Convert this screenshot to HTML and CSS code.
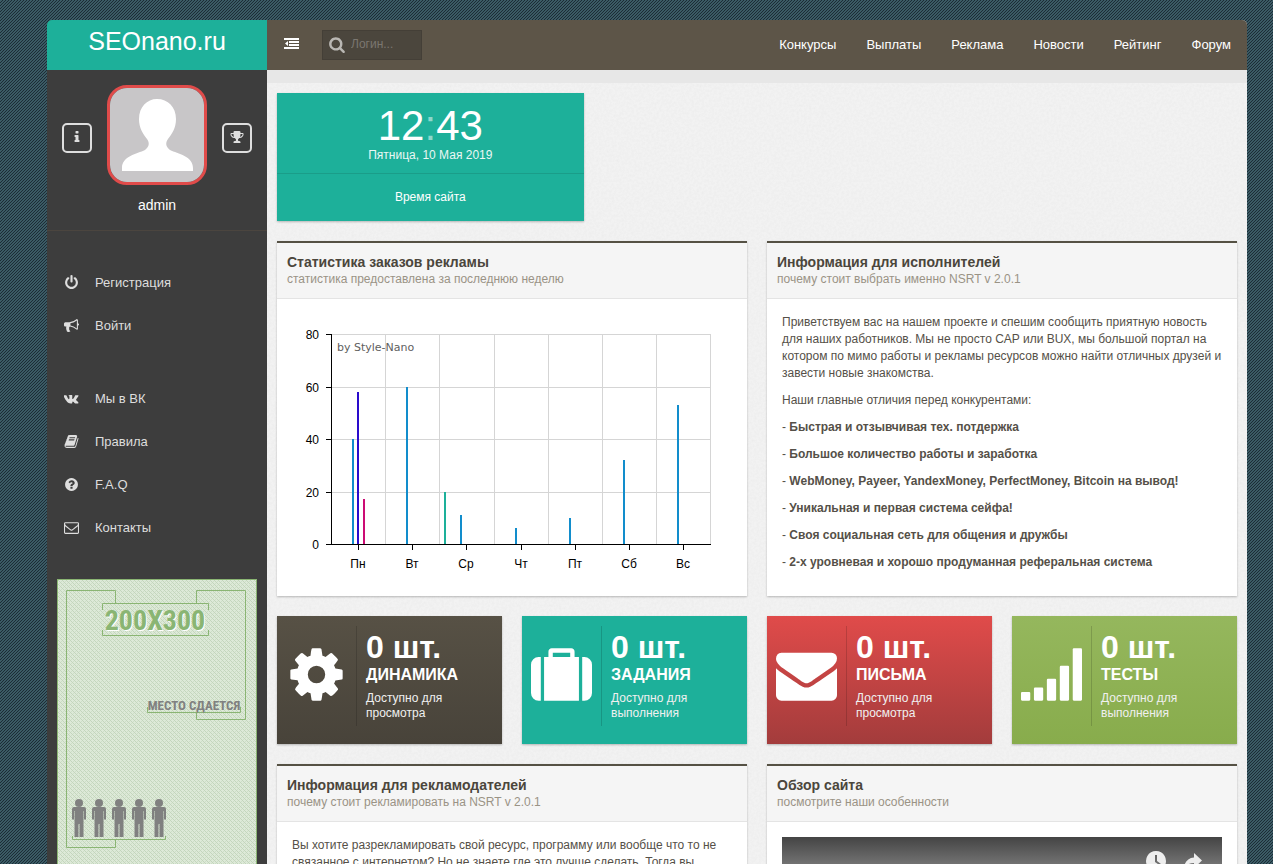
FILE: index.html
```html
<!DOCTYPE html>
<html lang="ru">
<head>
<meta charset="utf-8">
<title>SEOnano.ru</title>
<link rel="stylesheet" href="styles.css">
</head>
<body>
<svg class="defs" aria-hidden="true">
  <symbol id="i-power" viewBox="0 0 1792 1792"><path d="M1664 896q0 156-61 298t-164 245-245 164-298 61-298-61-245-164-164-245-61-298q0-182 80.500-343t226.500-270q43-32 95.500-25t83.500 50q32 42 24.500 94.500t-49.500 84.500q-98 74-151.500 181t-53.500 228q0 104 40.500 198.500t109.500 163.500 163.500 109.500 198.500 40.500 198.500-40.500 163.500-109.500 109.500-163.500 40.500-198.500q0-121-53.500-228t-151.500-181q-42-32-49.500-84.500t24.500-94.500q31-43 84-50t95 25q146 109 226.500 270t80.500 343zm-640-768v640q0 52-38 90t-90 38-90-38-38-90v-640q0-52 38-90t90-38 90 38 38 90z"/></symbol>
  <symbol id="i-horn" viewBox="0 0 1792 1792"><path d="M1664 640q53 0 90.500 37.500t37.500 90.500-37.500 90.500-90.500 37.500v384q0 52-38 90t-90 38q-417-347-812-380-58 19-91 66t-31 100.500 40 92.500q-20 33-23 65.500t6 58 33.500 55 48 50 61.500 50.500q-29 58-111.500 83t-168.500 11.500-132-55.500q-7-23-29.500-87.500t-32-94.500-23-89-15-101 3.500-98.500 22-110.500h-122q-66 0-113-47t-47-113v-192q0-66 47-113t113-47h480q435 0 896-384 52 0 90 38t38 90v384zm-128 604v-954q-394 302-768 343v270q377 42 768 341z"/></symbol>
  <symbol id="i-vk" viewBox="0 0 1920 1792"><path d="M1853 520q23 64-150 294-24 32-65 85-78 100-90 131-17 41 14 81 17 21 81 82h1l1 1 1 1 2 2q141 131 191 221 3 5 6.500 12.500t7 26.500-.5 34-25 27.500-59 12.500l-256 4q-24 5-56-5t-52-22l-20-12q-30-21-70-64t-68.500-77.500-61-58-56.500-15.500q-3 1-8 3.500t-17 14.500-21.500 29.500-17 52-6.500 77.500q0 15-3.500 27.500t-7.500 18.500l-4 5q-18 19-53 22h-115q-71 4-146-16.500t-131.500-53-103-66-70.500-57.500l-25-24q-10-10-27.500-30t-71.500-91-106-151-122.500-211-130.500-272q-6-16-6-27t3-16l4-6q15-19 57-19l274-2q12 2 23 6.500t16 8.500l5 3q16 11 24 32 20 50 46 103.500t41 81.500l16 29q29 60 56 104t48.500 68.500 41.500 38.500 34 14 27-5q2-1 5-5t12-22 13.500-47 9.500-81 0-125q-2-40-9-73t-14-46l-6-12q-25-34-85-43-13-2 5-24 16-19 38-30 53-26 239-24 82 1 135 13 20 5 33.500 13.500t20.500 24 10.500 32 3.500 45.500-1 55-2.500 70.500-1.500 82.500q0 11-1 42t-.5 48 3.500 40.500 11.500 39 22.500 24.500q8 2 17 4t26-11 38-34.500 52-67 68-107.500q60-104 107-225 4-10 10-17.500t11-10.500l4-3 5-2.500 13-3 20-.5 288-2q39-5 64 2.500t31 16.500z"/></symbol>
  <symbol id="i-book" viewBox="0 0 1792 1792"><path d="M1703 478q40 57 18 129l-275 906q-19 64-76.500 107.500t-122.500 43.500h-923q-77 0-148.500-53.500t-99.500-131.500q-24-67-2-127 0-4 3-27t4-37q1-8-3-21.500t-3-19.500q2-11 8-21t16.500-23.500 16.500-23.500q23-38 45-91.500t30-91.500q3-10 .5-30t-.5-28q3-11 17-28t17-23q21-36 42-92t25-90q1-9-2.500-32t.5-28q4-13 22-30.500t22-22.500q19-26 42.500-84.500t27.500-96.500q1-8-3-25.500t-2-26.500q2-8 9-18t18-23 17-21q8-12 16.500-30.500t15-35 16-36 19.500-32 26.500-23.500 36-11.500 47.500 5.500l-1 3q38-9 51-9h761q74 0 114 56t18 130l-274 906q-36 119-71.500 153.500t-128.500 34.500h-869q-27 0-38 15-11 16-1 43 24 70 144 70h923q29 0 56-15.500t35-41.500l300-987q7-22 5-57 38 15 59 43zm-1064 2q-4 13 2 22.500t20 9.500h608q13 0 25.500-9.500t16.500-22.500l21-64q4-13-2-22.500t-20-9.500h-608q-13 0-25.500 9.500t-16.500 22.500zm-83 256q-4 13 2 22.500t20 9.500h608q13 0 25.500-9.500t16.500-22.500l21-64q4-13-2-22.500t-20-9.500h-608q-13 0-25.500 9.500t-16.500 22.500z"/></symbol>
  <symbol id="i-faq" viewBox="0 0 1792 1792"><path d="M1024 1376v-192q0-14-9-23t-23-9h-192q-14 0-23 9t-9 23v192q0 14 9 23t23 9h192q14 0 23-9t9-23zm256-672q0-88-55.500-163t-138.500-116-170-41q-243 0-371 213-15 24 8 42l132 100q7 6 19 6 16 0 25-12 53-68 86-92 34-24 86-24 48 0 85.500 26t37.500 59q0 38-20 61t-68 45q-63 28-115.500 86.500t-52.500 125.500v36q0 14 9 23t23 9h192q14 0 23-9t9-23q0-19 21.500-49.500t54.500-49.500q32-18 49-28.500t46-35 44.500-48 28-60.500 12.500-81zm384 192q0 209-103 385.500t-279.500 279.500-385.500 103-385.500-103-279.500-279.500-103-385.500 103-385.500 279.500-279.500 385.500-103 385.500 103 279.500 279.500 103 385.500z"/></symbol>
  <symbol id="i-mail" viewBox="0 0 1792 1792"><path d="M1664 1504v-768q-32 36-69 66-268 206-426 338-51 43-83 67t-86.500 48.500-102.500 24.500h-2q-48 0-102.500-24.500t-86.500-48.500-83-67q-158-132-426-338-37-30-69-66v768q0 13 9.500 22.500t22.500 9.500h1472q13 0 22.500-9.500t9.500-22.500zm0-1051v-24.500l-.5-13-3-12.500-5.500-9-9-7.500-14-2.500h-1472q-13 0-22.500 9.500t-9.500 22.500q0 168 147 284 193 152 401 317 6 5 35 29.500t46 37.500 44.500 31.500 50.500 27.500 43 9h2q20 0 43-9t50.500-27.500 44.500-31.500 46-37.500 35-29.500q208-165 401-317 54-43 100.500-115.500t46.500-131.500zm128-37v1088q0 66-47 113t-113 47h-1472q-66 0-113-47t-47-113v-1088q0-66 47-113t113-47h1472q66 0 113 47t47 113z"/></symbol>
  <symbol id="i-info" viewBox="0 0 1792 1792"><path d="M1216 1344v128q0 26-19 45t-45 19h-512q-26 0-45-19t-19-45v-128q0-26 19-45t45-19h64v-384h-64q-26 0-45-19t-19-45v-128q0-26 19-45t45-19h384q26 0 45 19t19 45v576h64q26 0 45 19t19 45zm-128-1152v192q0 26-19 45t-45 19h-256q-26 0-45-19t-19-45v-192q0-26 19-45t45-19h256q26 0 45 19t19 45z"/></symbol>
  <symbol id="i-trophy" viewBox="0 0 1792 1792"><path d="M522 883q-74-162-74-371h-256v96q0 78 94.500 162t235.500 113zm1078-275v-96h-256q0 209-74 371 141-29 235.500-113t94.500-162zm128-128v128q0 71-41.500 143t-112 130-173 97.500-215.500 44.500q-42 54-95 95-38 34-52.500 72.500t-14.500 89.500q0 54 30.500 91t97.500 37q75 0 133.500 45.500t58.500 114.500v64q0 14-9 23t-23 9h-832q-14 0-23-9t-9-23v-64q0-69 58.500-114.500t133.500-45.500q67 0 97.500-37t30.500-91q0-51-14.500-89.500t-52.500-72.500q-53-41-95-95-113-5-215.500-44.500t-173-97.500-112-130-41.500-143v-128q0-40 28-68t68-28h288v-96q0-66 47-113t113-47h576q66 0 113 47t47 113v96h288q40 0 68 28t28 68z"/></symbol>
  <symbol id="i-search" viewBox="0 0 1792 1792"><path d="M1216 832q0-185-131.500-316.500t-316.500-131.500-316.500 131.500-131.500 316.500 131.500 316.500 316.500 131.500 316.500-131.500 131.500-316.500zm512 832q0 52-38 90t-90 38q-54 0-90-38l-343-342q-179 124-399 124-143 0-273.500-55.500t-225-150-150-225-55.500-273.500 55.500-273.500 150-225 225-150 273.500-55.500 273.500 55.500 225 150 150 225 55.500 273.500q0 220-124 399l343 343q37 37 37 90z"/></symbol>
  <symbol id="i-cog" viewBox="0 0 1792 1792"><path d="M1152 896q0-106-75-181t-181-75-181 75-75 181 75 181 181 75 181-75 75-181zm512-109v222q0 12-8 23t-20 13l-185 28q-19 54-39 91 35 50 107 138 10 12 10 25t-9 23q-27 37-99 108t-94 71q-12 0-26-9l-138-108q-44 23-91 38-16 136-29 186-7 28-36 28h-222q-14 0-24.500-8.500t-11.500-21.500l-28-184q-49-16-90-37l-141 107q-10 9-25 9-14 0-25-11-126-114-165-168-7-10-7-23 0-12 8-23 15-21 51-66.500t54-70.500q-27-50-41-99l-183-27q-13-2-21-12.500t-8-23.500v-222q0-12 8-23t19-13l186-28q14-46 39-92-40-57-107-138-10-12-10-24 0-10 9-23 26-36 98.500-107.500t94.500-71.500q13 0 26 10l138 107q44-23 91-38 16-136 29-186 7-28 36-28h222q14 0 24.500 8.500t11.500 21.500l28 184q49 16 90 37l142-107q9-9 24-9 13 0 25 10 129 119 165 170 7 8 7 22 0 12-8 23-15 21-51 66.500t-54 70.500q26 50 41 98l183 28q13 2 21 12.500t8 23.500z"/></symbol>
  <symbol id="i-case" viewBox="0 0 1792 1792"><path d="M640 384h512v-128h-512v128zm-352 0v1280h-64q-92 0-158-66t-66-158v-832q0-92 66-158t158-66h64zm1120 0v1280h-1024v-1280h128v-160q0-40 28-68t68-28h576q40 0 68 28t28 68v160h128zm384 224v832q0 92-66 158t-158 66h-64v-1280h64q92 0 158 66t66 158z"/></symbol>
  <symbol id="i-envelope" viewBox="0 0 1792 1792"><path d="M1792 710v794q0 66-47 113t-113 47h-1472q-66 0-113-47t-47-113v-794q44 49 101 87 362 246 497 345 57 42 92.500 65.500t94.500 48 110 24.500h2q51 0 110-24.500t94.500-48 92.500-65.500q170-123 498-345 57-39 100-87zm0-294q0 79-49 151t-122 123q-376 261-468 325-10 7-42.500 30.500t-54 38-52 32.500-57.500 27-50 9h-2q-23 0-50-9t-57.500-27-52-32.500-54-38-42.500-30.500q-91-64-262-182.500t-205-142.500q-62-42-117-115.500t-55-136.500q0-78 41.500-130t118.500-52h1472q65 0 112.500 47t47.500 113z"/></symbol>
  <symbol id="i-signal" viewBox="0 0 1792 1792"><rect x="0" y="1408" width="272" height="256" rx="32"/><rect x="380" y="1280" width="272" height="384" rx="32"/><rect x="760" y="1024" width="272" height="640" rx="32"/><rect x="1140" y="640" width="272" height="1024" rx="32"/><rect x="1520" y="128" width="272" height="1536" rx="32"/></symbol>
  <symbol id="man" viewBox="0 0 14 38"><circle cx="7" cy="4" r="4"/><path d="M2 8h10q2 0 2 2v10.500h-2V12h-.5v26h-4V25h-1v13h-4V12H2v8.500H0V10q0-2 2-2z"/></symbol>
</svg>

<div class="wrapper">
  <aside class="sidebar">
    <a class="logo" href="#">SEOnano.ru</a>
    <div class="profile">
      <div class="profile-row">
        <button class="square" type="button" aria-label="Информация"><svg><use href="#i-info"/></svg></button>
        <svg class="avatar" viewBox="0 0 94 94" role="img" aria-label="admin"><rect width="94" height="94" fill="#c8c6c8"/><path fill="#fff" d="M47 11c11 0 19 8 19 20 0 9-4 15-8 20-3 4-2 8 2 11 8 4 23 6 23 18v3H12v-3c0-12 15-14 23-18 4-3 5-7 2-11-4-5-8-11-8-20 0-12 8-20 18-20z"/></svg>
        <button class="square" type="button" aria-label="Рейтинг"><svg><use href="#i-trophy"/></svg></button>
      </div>
      <div class="name">admin</div>
    </div>
    <nav class="menu">
      <a href="#"><svg><use href="#i-power"/></svg>Регистрация</a>
      <a href="#"><svg><use href="#i-horn"/></svg>Войти</a>
    </nav>
    <nav class="menu">
      <a href="#"><svg><use href="#i-vk"/></svg>Мы в ВК</a>
      <a href="#"><svg><use href="#i-book"/></svg>Правила</a>
      <a href="#"><svg><use href="#i-faq"/></svg>F.A.Q</a>
      <a href="#"><svg><use href="#i-mail"/></svg>Контакты</a>
    </nav>
    <a class="banner" href="#">
      <svg viewBox="0 0 200 300">
        <defs><pattern id="weave" width="4" height="4" patternUnits="userSpaceOnUse"><rect width="4" height="4" fill="#dde9d8"/><path d="M0 0h1v1H0zM1 1h1v1H1zM2 2h1v1H2zM3 3h1v1H3z" fill="#c3d5bc"/><path d="M2 0h1v1H2zM0 2h1v1H0z" fill="#cddfc6"/></pattern></defs>
        <rect width="200" height="300" fill="url(#weave)"/>
        <g fill="none" stroke="#8ab573">
          <rect x=".5" y=".5" width="199" height="299"/>
          <path d="M58.500 25V11.500h-49v257h49v-8M139.500 25V11.500h49v129h-49v-7M45.500 31v-6.500h106V31M45.500 51v5.500h106V51M90.500 128v5.500h93V128M15.500 257v3.500h93V257"/>
        </g>
        <text class="b-shadow" x="99" y="52" text-anchor="middle">200X300</text>
        <text class="b-size" x="98" y="51" text-anchor="middle">200X300</text>
        <text class="b-place" x="137" y="131" text-anchor="middle">МЕСТО СДАЕТСЯ</text>
        <g fill="#808080">
          <use href="#man" x="15" y="220" width="14" height="38"/><use href="#man" x="35" y="220" width="14" height="38"/><use href="#man" x="55" y="220" width="14" height="38"/><use href="#man" x="75" y="220" width="14" height="38"/><use href="#man" x="95" y="220" width="14" height="38"/>
        </g>
      </svg>
    </a>
  </aside>

  <div class="content">
    <header class="topbar">
      <button class="toggle" type="button" aria-label="Меню"><svg viewBox="0 0 15 12"><path d="M0 0h15v2H0zM5 3h10v2H5zM5 6h10v2H5zM0 9h15v2H0zM4 3v5L1 5.500z"/></svg></button>
      <label class="search"><svg><use href="#i-search"/></svg><input type="text" placeholder="Логин..." aria-label="Логин"></label>
      <nav class="topnav">
        <a href="#">Конкурсы</a><a href="#">Выплаты</a><a href="#">Реклама</a><a href="#">Новости</a><a href="#">Рейтинг</a><a href="#">Форум</a>
      </nav>
    </header>
    <div class="strip"></div>
    <main class="main">
      <section class="clock">
        <div class="now">
          <div class="time">12<span>:</span>43</div>
          <div class="date">Пятница, 10 Мая 2019</div>
        </div>
        <div class="caption">Время сайта</div>
      </section>

      <section class="panel first">
        <div class="panel-head"><h2>Статистика заказов рекламы</h2><p>статистика предоставлена за последнюю неделю</p></div>
        <div class="panel-body">
          <svg class="chart" viewBox="0 0 440 267">
            <path class="grid" d="M40 20.500h379M40 73.500h379M40 125.500h379M40 178.500h379M93.500 21v209M147.500 21v209M202.500 21v209M256.500 21v209M310.500 21v209M364.500 21v209M418.500 21v209"/>
            <g fill="#128dcc"><rect x="60" y="125" width="2" height="105"/><rect x="114" y="73" width="2" height="157"/><rect x="168" y="201" width="2" height="29"/><rect x="223" y="214" width="2" height="16"/><rect x="277" y="204" width="2" height="26"/><rect x="331" y="146" width="2" height="84"/><rect x="385" y="91" width="2" height="139"/></g>
            <rect x="65" y="78" width="2" height="152" fill="#2a0ccc"/>
            <rect x="71" y="185" width="2" height="45" fill="#cc0c74"/>
            <rect x="152" y="178" width="2" height="52" fill="#1db09a"/>
            <path class="axis" d="M39.500 20v211M34 20.500h6M34 73.500h6M34 125.500h6M34 178.500h6M34 230.500h385M66.500 231v5M120.500 231v5M174.500 231v5M229.500 231v5M283.500 231v5M337.500 231v5M391.500 231v5"/>
            <g text-anchor="end"><text x="27" y="25">80</text><text x="27" y="78">60</text><text x="27" y="130">40</text><text x="27" y="183">20</text><text x="27" y="235">0</text></g>
            <g text-anchor="middle"><text x="66" y="254">Пн</text><text x="120" y="254">Вт</text><text x="174" y="254">Ср</text><text x="229" y="254">Чт</text><text x="283" y="254">Пт</text><text x="337" y="254">Сб</text><text x="391" y="254">Вс</text></g>
            <text class="credit" x="45" y="37">by Style-Nano</text>
          </svg>
        </div>
      </section>

      <section class="panel">
        <div class="panel-head"><h2>Информация для исполнителей</h2><p>почему стоит выбрать именно NSRT v 2.0.1</p></div>
        <div class="panel-body">
          <p>Приветствуем вас на нашем проекте и спешим сообщить приятную новость для наших работников. Мы не просто CAP или BUX, мы большой портал на котором по мимо работы и рекламы ресурсов можно найти отличных друзей и завести новые знакомства.</p>
          <p>Наши главные отличия перед конкурентами:</p>
          <p>- <b>Быстрая и отзывчивая тех. потдержка</b></p>
          <p>- <b>Большое количество работы и заработка</b></p>
          <p>- <b>WebMoney, Payeer, YandexMoney, PerfectMoney, Bitcoin на вывод!</b></p>
          <p>- <b>Уникальная и первая система сейфа!</b></p>
          <p>- <b>Своя социальная сеть для общения и дружбы</b></p>
          <p>- <b>2-х уровневая и хорошо продуманная реферальная система</b></p>
        </div>
      </section>

      <a class="tile dark" href="#"><span class="tile-icon"><svg><use href="#i-cog"/></svg></span><span class="tile-text"><b class="num">0 шт.</b><b class="title">ДИНАМИКА</b><span>Доступно для просмотра</span></span></a>
      <a class="tile teal" href="#"><span class="tile-icon"><svg><use href="#i-case"/></svg></span><span class="tile-text"><b class="num">0 шт.</b><b class="title">ЗАДАНИЯ</b><span>Доступно для выполнения</span></span></a>
      <a class="tile red" href="#"><span class="tile-icon"><svg><use href="#i-envelope"/></svg></span><span class="tile-text"><b class="num">0 шт.</b><b class="title">ПИСЬМА</b><span>Доступно для просмотра</span></span></a>
      <a class="tile green" href="#"><span class="tile-icon"><svg><use href="#i-signal"/></svg></span><span class="tile-text"><b class="num">0 шт.</b><b class="title">ТЕСТЫ</b><span>Доступно для выполнения</span></span></a>

      <section class="panel">
        <div class="panel-head"><h2>Информация для рекламодателей</h2><p>почему стоит рекламировать на NSRT v 2.0.1</p></div>
        <div class="panel-body">
          <p>Вы хотите разрекламировать свой ресурс, программу или вообще что то не связанное с интернетом? Но не знаете где это лучше сделать. Тогда вы</p>
        </div>
      </section>

      <section class="panel">
        <div class="panel-head"><h2>Обзор сайта</h2><p>посмотрите наши особенности</p></div>
        <div class="panel-body">
          <div class="video">
            <button type="button" aria-label="Смотреть позже"><svg viewBox="0 0 22 22"><path fill-rule="evenodd" d="M11 1a10 10 0 1 0 .01 0zM10 5h2v6l4 3-1 1.500-5-3.500z"/></svg></button>
            <button type="button" aria-label="Поделиться"><svg viewBox="0 0 22 22"><path d="M12 3l8 7.500-8 7.500v-5c-5 0-8 2-10 6 0-7 4-11 10-11.500z"/></svg></button>
          </div>
        </div>
      </section>
    </main>
  </div>
</div>
</body>
</html>
```
FILE: styles.css
```css
* { box-sizing: border-box; }

body {
  margin: 0;
  height: 100vh;
  overflow: hidden;
  padding: 20px 26px 0 47px;
  font: 12px/17px "Liberation Sans", Arial, sans-serif;
  color: #555048;
  background: #2e4c57 url("data:image/svg+xml,%3Csvg xmlns='http://www.w3.org/2000/svg' width='3' height='3' shape-rendering='crispEdges'%3E%3Crect width='3' height='3' fill='%233b5b65'/%3E%3Cpath d='M2 0h1v1H2zM1 1h1v1H1zM0 2h1v1H0z' fill='%231c2c36'/%3E%3C/svg%3E");
}

a { color: inherit; text-decoration: none; }
button { border: 0; padding: 0; background: none; color: inherit; font: inherit; cursor: pointer; }
svg { display: block; fill: currentColor; }
h2, p { margin: 0; }
.defs { position: absolute; width: 0; height: 0; }

.wrapper { display: flex; min-height: 100%; border-radius: 5px 5px 0 0; overflow: hidden; }

/* sidebar */
.sidebar { flex: 0 0 220px; background: #3d3d3d; color: #dedede; }
.logo { display: block; height: 50px; background: #1db09a; color: #fff; font-size: 25px; line-height: 43px; text-align: center; }
.profile { padding: 15px 15px 16px; border-bottom: 1px solid #4b453f; }
.profile-row { display: flex; align-items: center; justify-content: space-between; }
.square { display: grid; place-items: center; width: 30px; height: 30px; padding-bottom: 3px; border: 2px solid #dedede; border-radius: 5px; margin-top: 6px; }
.square svg { width: 14px; height: 14px; }
.avatar { width: 100px; height: 100px; border: 3px solid #e04b4a; border-radius: 20px; }
.name { margin-top: 12px; color: #fff; font-size: 14px; text-align: center; }
.menu { padding-top: 30px; }
.menu a { display: flex; align-items: center; gap: 16px; height: 43px; padding-left: 17px; font-size: 13px; }
.menu svg { width: 15px; height: 15px; }
.banner { display: block; margin: 30px 10px 0; }
.b-size, .b-shadow { font: bold 28px "Liberation Sans Narrow", "Roboto Condensed", sans-serif; fill: #8ab573; }
.b-shadow { fill: #fff; }
.b-place { font: bold 13px "Liberation Sans Narrow", "Roboto Condensed", sans-serif; fill: #808080; }

/* main column */
.content {
  flex: 1;
  min-width: 0;
  background: #f2f2f2 url("data:image/svg+xml,%3Csvg xmlns='http://www.w3.org/2000/svg' width='250' height='250'%3E%3Cfilter id='n'%3E%3CfeTurbulence type='fractalNoise' baseFrequency='.4' numOctaves='3' stitchTiles='stitch'/%3E%3CfeColorMatrix values='0 0 0 0 .4 0 0 0 0 .4 0 0 0 0 .4 .14 0 0 0 -.05'/%3E%3C/filter%3E%3Crect width='250' height='250' filter='url(%23n)'/%3E%3C/svg%3E");
}
.topbar { display: flex; align-items: center; height: 50px; padding: 0 1px 0 17px; background: #5d5548; color: #fff; }
.toggle { width: 15px; margin-bottom: 2px; }
.search { display: flex; align-items: center; gap: 5px; width: 100px; height: 30px; margin-left: 23px; padding: 0 5px 1px; background: #4b463d; border: 1px solid #443f37; color: #b9b7b3; }
.search svg { flex: none; width: 18px; height: 17px; }
.search input { width: 100%; min-width: 0; padding: 0; border: 0; outline: 0; background: none; color: #fff; font: inherit; }
.search input::placeholder { color: #7b7770; opacity: 1; }
.topnav { display: flex; margin-left: auto; padding-bottom: 2px; font-size: 13px; }
.topnav a { padding: 0 15px; }
.strip { height: 13px; background: #e7e7e7; }
.main { display: grid; grid-template-columns: repeat(12, minmax(0, 1fr)); gap: 20px; padding: 10px; }

.clock, .tile, .panel { box-shadow: 0 1px 2px rgba(0, 0, 0, .25); }
.clock { grid-column: span 4; min-height: 128px; background: #1db09a; color: #fff; text-align: center; }
.now { padding: 12px 0 9px; border-bottom: 1px solid #1a9d89; }
.time { font-size: 42px; line-height: 42px; }
.time span { color: #8ed7cc; }
.date { color: #eaf7f4; }
.caption { padding: 15px 0; }

.panel { grid-column: span 6; background: #fff; border-top: 2px solid #555144; }
.panel.first { grid-column: 1 / span 6; }
.panel-head { padding: 11px 10px 10px; background: #f5f5f5; border-bottom: 1px solid #e4e4e4; }
.panel-head h2 { color: #4b463c; font-size: 14px; line-height: 17px; }
.panel-head p { color: #9a9385; }
.panel-body { padding: 15px; }
.panel-body p { margin-bottom: 10px; }
.chart { width: 100%; color: #000; }
.chart .grid { fill: none; stroke: #d5d5d5; }
.chart .axis { fill: none; stroke: #000; }
.chart .credit { font: 11px "DejaVu Sans", sans-serif; fill: #606060; }

.tile { grid-column: span 3; display: flex; min-height: 128px; padding: 10px 10px 18px 0; color: #fff; }
.tile-icon { flex: 0 0 80px; display: flex; justify-content: center; padding-top: 18px; border-right: 1px solid rgba(0, 0, 0, .15); }
.tile-icon svg { width: 61px; height: 61px; }
.tile-text { padding: 4px 20px 0 9px; line-height: 15px; color: #f0f0f0; }
.tile-text b { display: block; color: #fff; }
.num { font-size: 32px; line-height: 34px; }
.title { margin-bottom: 5px; font-size: 16px; line-height: 22px; }
.dark { background: linear-gradient(#575145, #48433a); }
.teal { background: #1db09a; }
.red { background: linear-gradient(#e04b4a, #a33c3c); }
.green { background: linear-gradient(#95b75d, #88ac4c); }

.video { display: flex; justify-content: flex-end; gap: 15px; min-height: 240px; padding: 13px 18px; background: linear-gradient(#444, #777 30px, #888 60px); color: #eee; }
.video button { align-self: flex-start; }
.video svg { width: 22px; height: 22px; }
```
